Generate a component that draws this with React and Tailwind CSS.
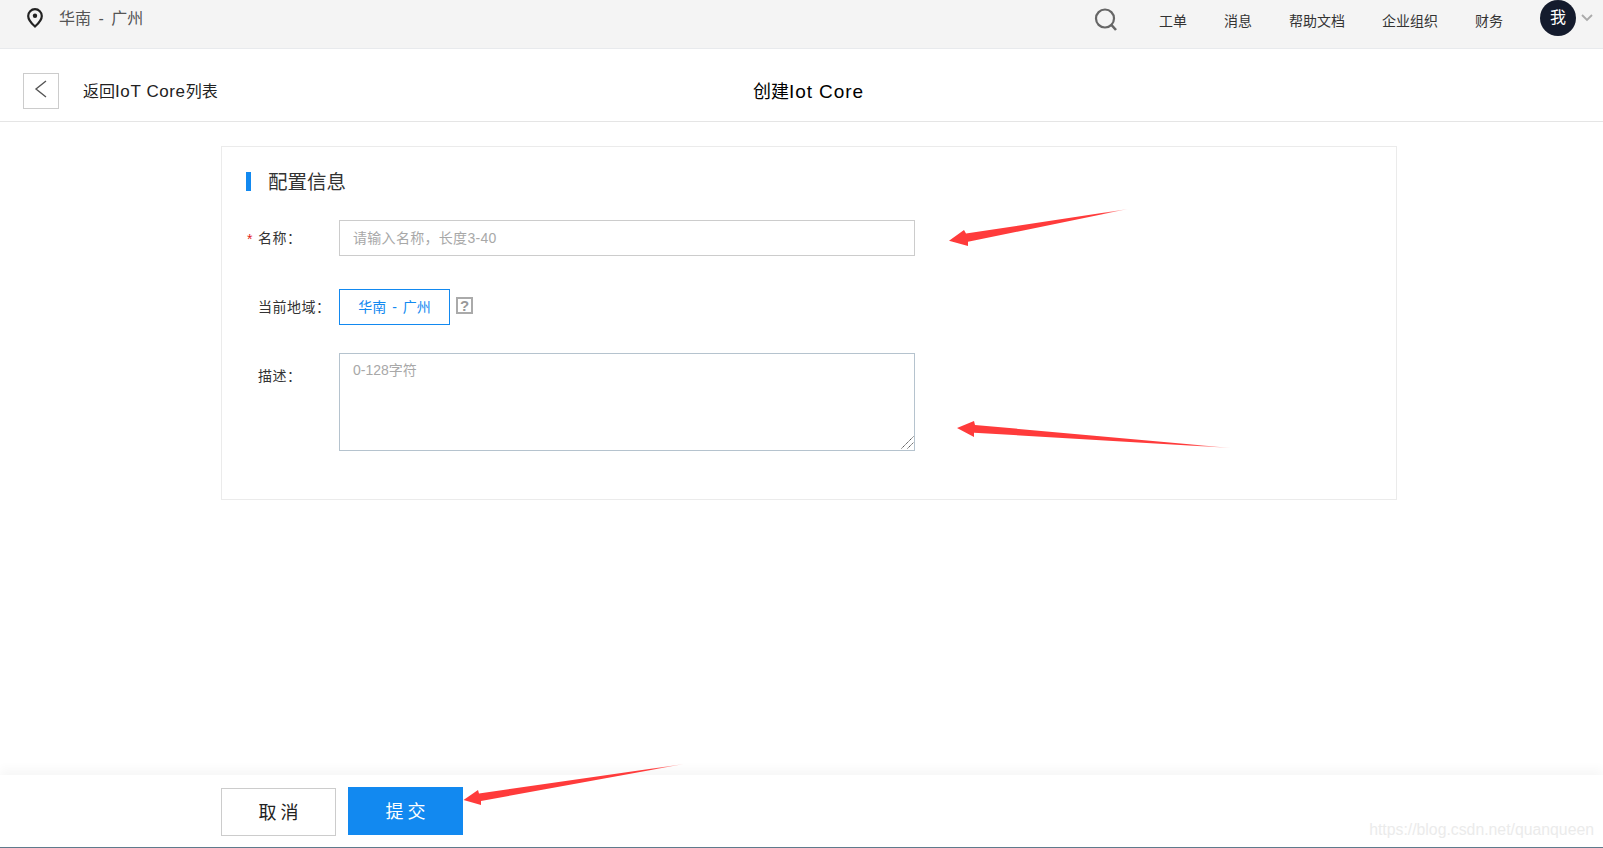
import React from "react";

const FONT = '"Liberation Sans", "Noto Sans CJK SC", sans-serif';

function Arrow({ points, id, x1, y1, x2, y2 }) {
  return (
    <>
      <linearGradient id={id} gradientUnits="userSpaceOnUse" x1={x1} y1={y1} x2={x2} y2={y2}>
        <stop offset="0" stopColor="#ff3b3b" />
        <stop offset="0.85" stopColor="#ff3b3b" />
        <stop offset="1" stopColor="#ff3b3b" stopOpacity="0.25" />
      </linearGradient>
      <polygon points={points} fill={`url(#${id})`} />
    </>
  );
}

function Field({ star, label, children, className, labelClass = "pt-[8px]" }) {
  return (
    <div className={`flex items-start ${className}`}>
      <div className={`w-[117px] shrink-0 pl-[25px] flex text-[14px] leading-[20px] text-[#333] ${labelClass}`}>
        <span className="w-[11px] text-[#e2231a] text-[14px] leading-[22px]">{star ? "*" : ""}</span>
        <span className="tracking-[0.5px]">{label}</span>
      </div>
      {children}
    </div>
  );
}

export default function App() {
  return (
    <div className="relative h-[848px] w-full flex flex-col bg-white overflow-hidden" style={{ fontFamily: FONT }}>
      <header className="h-[49px] shrink-0 bg-[#f4f4f4] border-b border-[#e8eaed] flex items-start justify-between">
        <div className="flex items-center pl-[27px] h-[36px]">
          <svg width="16" height="20" viewBox="0 0 16 20" className="-mt-[1px]">
            <path d="M8 1.200C4.200 1.200 1.200 4.200 1.200 7.900c0 4.500 5 9 6.800 10.600 1.800-1.600 6.800-6.100 6.800-10.600C14.800 4.200 11.800 1.200 8 1.200z" fill="none" stroke="#222" strokeWidth="2.200" />
            <circle cx="8" cy="7.800" r="2.200" fill="#222" />
          </svg>
          <span className="ml-[16px] mt-[2px] text-[16px] leading-[20px] text-[#555]">
            华南<span className="mx-[3px]"> - </span>广州
          </span>
        </div>
        <div className="flex items-start text-[#333]">
          <svg width="24" height="25" viewBox="0 0 24 25" className="mt-[7px] mr-[41px]">
            <circle cx="11" cy="11.500" r="9" fill="none" stroke="#666" strokeWidth="2.200" />
            <path d="M17.500 18l4.500 5" stroke="#666" strokeWidth="2.600" fill="none" />
          </svg>
          <div className="flex gap-[37px] pt-[11px] leading-[20px] text-[14px]">
            <span>工单</span>
            <span>消息</span>
            <span>帮助文档</span>
            <span>企业组织</span>
            <span>财务</span>
          </div>
          <div className="ml-[37px] w-[36px] h-[36px] rounded-full bg-[#141b2d] text-white text-[16px] flex items-center justify-center">我</div>
          <svg width="12" height="8" viewBox="0 0 12 8" className="ml-[5px] mt-[14px] mr-[10px]">
            <path d="M1 1l5 5 5-5" fill="none" stroke="#aaa" strokeWidth="1.800" />
          </svg>
        </div>
      </header>

      <div className="relative h-[73px] shrink-0 border-b border-[#e5e5e5] flex items-start pt-[24px] pl-[23px]">
        <div className="w-[36px] h-[36px] border border-[#ccc] flex items-center justify-center">
          <svg width="14" height="18" viewBox="0 0 14 18" className="-mt-[4px]">
            <path d="M12 1L2 9l10 8" fill="none" stroke="#555" strokeWidth="1.400" />
          </svg>
        </div>
        <span className="ml-[24px] mt-[7px] text-[16px] leading-[24px] text-[#222]">
          返回<span className="text-[17px] tracking-[0.6px]">IoT Core</span>列表
        </span>
        <div className="absolute inset-0 pt-[30px] flex justify-center pointer-events-none">
          <span className="text-[18px] leading-[26px] text-black ml-[14px]">
            创建<span className="text-[19px] tracking-[0.9px]">Iot Core</span>
          </span>
        </div>
      </div>

      <main className="flex-1 px-[221px] pt-[24px]">
        <section className="w-[1176px] h-[354px] border border-[#ebebeb]">
          <div className="flex items-center mt-[24px] ml-[24px] h-[20px]">
            <div className="w-[5px] h-[19px] bg-[#1289f0]" />
            <h2 className="ml-[17px] mt-[2px] text-[19.500px] leading-[24px] text-[#333] font-normal">配置信息</h2>
          </div>
          <Field star label="名称：" className="mt-[29px]">
            <input
              placeholder="请输入名称，长度3-40"
              className="w-[576px] h-[36px] border border-[#ccc] px-[13px] text-[14px] tracking-[0.3px] outline-none placeholder:text-[#a8a8a8]"
            />
          </Field>
          <Field label="当前地域：" className="mt-[33px]">
            <div className="w-[111px] h-[36px] border border-[#1289f0] flex items-center justify-center text-[14px] text-[#1289f0]">
              <span className="mt-[1px]">华南<span className="mx-[2px]"> - </span>广州</span>
            </div>
            <div className="ml-[6px] mt-[8px] w-[17px] h-[17px] border-2 border-[#aaa] text-[#999] text-[15px] leading-[13px] font-bold text-center">?</div>
          </Field>
          <Field label="描述：" labelClass="pt-[13px]" className="mt-[28px]">
            <div className="relative w-[576px] h-[98px]">
              <textarea
                placeholder="0-128字符"
                className="block w-full h-full border border-[#b5c3ce] px-[13px] py-[6px] text-[14px] outline-none resize-none placeholder:text-[#a8a8a8]"
              />
              <svg width="13" height="13" viewBox="0 0 13 13" className="absolute right-[1px] bottom-[2px] pointer-events-none">
                <path d="M0.500 12.500L12.500 0.500M6.500 12.500L12.500 6.500" stroke="#555" strokeWidth="1" strokeDasharray="1.500 0.500" fill="none" />
              </svg>
            </div>
          </Field>
        </section>
      </main>

      <footer className="h-[73px] shrink-0 border-b-[1px] border-[#5f7a8c] bg-white shadow-[0_-6px_10px_rgba(0,0,0,0.035)] flex items-start pl-[221px] pt-[12px]">
        <button className="mt-[1px] w-[115px] h-[48px] border border-[#ccc] pl-[4px] pt-[3px] text-[18px] tracking-[4px] text-[#222]">取消</button>
        <button className="ml-[12px] w-[115px] h-[48px] bg-[#1289f0] pl-[4px] pt-[3px] text-[18px] tracking-[4px] text-white">提交</button>
      </footer>

      <div className="absolute right-[9px] bottom-[8px] text-[15.800px] leading-[20px] text-[#ebebeb]">
        https://blog.csdn.net/quanqueen
      </div>

      <svg className="absolute left-0 top-0 pointer-events-none" width="1603" height="848" viewBox="0 0 1603 848">
        <Arrow id="a1" x1="949" y1="240" x2="1128" y2="209" points="949,240.700 964,230 966,233.500 1128,209 968,241.700 968,246" />
        <Arrow id="a2" x1="957" y1="428" x2="1231" y2="448" points="957,428 974,421 975,425 1231,448 974,432.700 974,437" />
        <Arrow id="a3" x1="463" y1="800" x2="684" y2="764" points="463.500,800 478,790 479,793.500 684,764 481,801 481,805" />
      </svg>
    </div>
  );
}
